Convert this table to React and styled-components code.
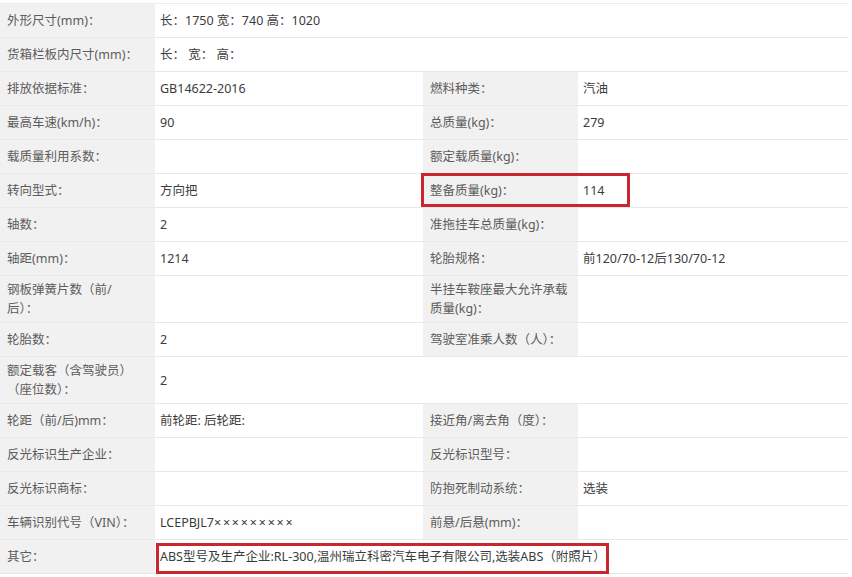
import React from "react";
import styled, { createGlobalStyle } from "styled-components";

const GlobalStyle = createGlobalStyle`
  html, body {
    margin: 0;
    padding: 0;
    background: #ffffff;
  }
  body {
    font-family: "Noto Sans", "Noto Sans CJK SC", sans-serif;
  }
`;

const Page = styled.div`
  width: 852px;
  height: 577px;
  padding-top: 3px;
  box-sizing: border-box;
  overflow: hidden;
`;

const Table = styled.div`
  display: grid;
  grid-template-columns: 155px 268px 155px 270px;
  width: 848px;
  border-top: 1px solid #ececec;
  border-right: 1px solid #efefef;
  box-sizing: border-box;
`;

const Cell = styled.div`
  position: relative;
  display: flex;
  align-items: center;
  min-height: 34px;
  box-sizing: border-box;
  padding: 4px 4px 4px ${(p) => (p.$label ? "7px" : "5px")};
  border-bottom: 1px solid #e8e8e8;
  background: ${(p) => (p.$label ? "#f1f1f1" : "#ffffff")};
  color: ${(p) => (p.$label ? "#5c5c5c" : "#3c3c3c")};
  font-size: 12.5px;
  line-height: 19px;
  grid-column: ${(p) => (p.$wide ? "span 3" : "auto")};
  white-space: pre-line;
`;

const Masked = styled.span`
  letter-spacing: 1.8px;
`;

const Highlight = styled.div`
  position: absolute;
  z-index: 1;
  left: ${(p) => p.$left}px;
  top: ${(p) => p.$top}px;
  width: ${(p) => p.$width}px;
  height: ${(p) => p.$height}px;
  border: 3px solid #c9262f;
  box-sizing: border-box;
  pointer-events: none;
`;

const rows = [
  { label: "外形尺寸(mm)：", value: "长：1750 宽：740 高：1020", wide: true },
  { label: "货箱栏板内尺寸(mm)：", value: "长：  宽：  高：", wide: true },
  { label: "排放依据标准：", value: "GB14622-2016", label2: "燃料种类：", value2: "汽油" },
  { label: "最高车速(km/h)：", value: "90", label2: "总质量(kg)：", value2: "279" },
  { label: "载质量利用系数：", value: "", label2: "额定载质量(kg)：", value2: "" },
  { label: "转向型式：", value: "方向把", label2: "整备质量(kg)：", value2: "114", mark: true },
  { label: "轴数：", value: "2", label2: "准拖挂车总质量(kg)：", value2: "" },
  { label: "轴距(mm)：", value: "1214", label2: "轮胎规格：", value2: "前120/70-12后130/70-12" },
  { label: "钢板弹簧片数（前/\n后）：", value: "", label2: "半挂车鞍座最大允许承载\n质量(kg)：", value2: "" },
  { label: "轮胎数：", value: "2", label2: "驾驶室准乘人数（人）：", value2: "" },
  { label: "额定载客（含驾驶员）\n（座位数）：", value: "2", wide: true },
  { label: "轮距（前/后)mm：", value: "前轮距: 后轮距:", label2: "接近角/离去角（度）：", value2: "" },
  { label: "反光标识生产企业：", value: "", label2: "反光标识型号：", value2: "" },
  { label: "反光标识商标：", value: "", label2: "防抱死制动系统：", value2: "选装" },
  {
    label: "车辆识别代号（VIN）：",
    value: (
      <>
        LCEPBJL7<Masked>×××××××××</Masked>
      </>
    ),
    label2: "前悬/后悬(mm)：",
    value2: "",
  },
  {
    label: "其它：",
    value: "ABS型号及生产企业:RL-300,温州瑞立科密汽车电子有限公司,选装ABS（附照片）",
    wide: true,
    mark: true,
  },
];

const App = () => {
  return (
    <>
      <GlobalStyle />
      <Page>
        <Table>
          {rows.map((row, i) => (
            <React.Fragment key={i}>
              <Cell $label>{row.label}</Cell>
              <Cell $wide={row.wide}>
                {row.value}
                {row.wide && row.mark && (
                  <Highlight $left={1} $top={3} $width={453} $height={31} />
                )}
              </Cell>
              {!row.wide && (
                <>
                  <Cell $label>
                    {row.label2}
                    {row.mark && (
                      <Highlight $left={-2} $top={-1} $width={209} $height={34} />
                    )}
                  </Cell>
                  <Cell>{row.value2}</Cell>
                </>
              )}
            </React.Fragment>
          ))}
        </Table>
      </Page>
    </>
  );
};

export default App;
